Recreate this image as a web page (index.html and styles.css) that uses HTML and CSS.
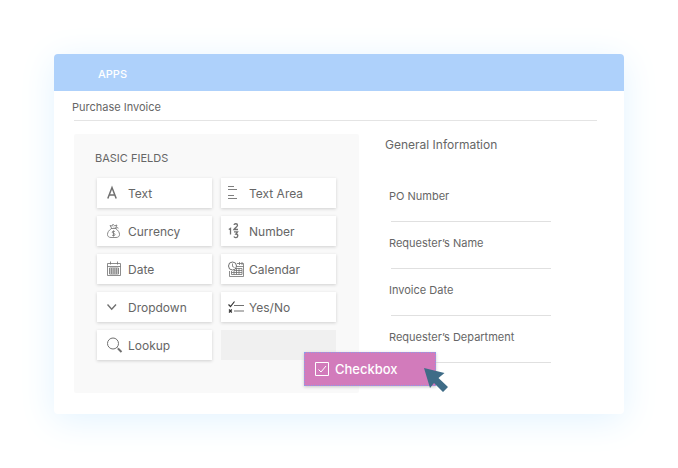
FILE: index.html
```html
<!DOCTYPE html>
<html lang="en">
    <head>
        <meta charset="utf-8">
        <title>Purchase Invoice</title>
        <link rel="stylesheet" href="styles.css">
    </head>
    <body>
        <div class="window">
            <header class="topbar">APPS</header>
            <main class="content">
                <h1 class="title">Purchase Invoice</h1>
                <div class="columns">
                    <section class="palette">
                        <h2 class="palette-title">BASIC FIELDS</h2>
                        <div class="fields">
                            <button class="field" type="button">
                                <svg class="icon" viewBox="0 0 16 16"><path d="M0.800 13.500L5 2.500L9.200 13.500M2.300 10H7.700" stroke-width="1.500"/></svg>
                                Text
                            </button>
                            <button class="field" type="button">
                                <svg class="icon" viewBox="0 0 16 16"><path d="M0 1.500H6M0 4.500H9M0 10.500H6M0 13.500H9" stroke-width="0.900"/></svg>
                                Text Area
                            </button>
                            <button class="field" type="button">
                                <svg class="icon" viewBox="0 0 16 16"><path d="M4.500 5.500C1.500 7.500 0.500 9.500 0.500 11.500C0.500 13.500 2 14.500 4 14.500H9C11 14.500 12.500 13.500 12.500 11.500C12.500 9.500 11.500 7.500 8.500 5.500M4 5.500H9.500M4.500 5L3 2.500L5 3L6 1.200L7.500 2.800L10 2L8.500 5M6 3.500L7 4.500M9 4L11.500 5.200M8 8.800C7.200 7.800 5.200 8 5.200 9.200C5.200 10.600 8 10 8 11.600C8 12.900 5.800 13 5 12M6.500 7.500V13.500" stroke-width="0.800"/></svg>
                                Currency
                            </button>
                            <button class="field" type="button">
                                <svg class="icon" viewBox="0 0 16 16"><path d="M0.800 6.500L2.500 5.500V11.500M6 2C6.300 0.300 9.500 0.300 9.500 2.200C9.500 3.600 7.500 4.500 6 6.500H10M6 8.800H9.500L7.800 11C9 11 9.800 11.700 9.800 12.800C9.800 15 6.500 15 5.900 13.500" stroke-width="1.300"/></svg>
                                Number
                            </button>
                            <button class="field" type="button">
                                <svg class="icon" viewBox="0 0 16 16"><path d="M0.500 2.500H13.500V14.500H0.500ZM0.500 5.500H13.500M3.500 0.500V3.500M10.500 0.500V3.500M2.500 7H11.500V13H2.500ZM2.500 9H11.500M2.500 11H11.500M4.700 7V13M7 7V13M9.300 7V13" stroke-width="0.800"/></svg>
                                Date
                            </button>
                            <button class="field" type="button">
                                <svg class="icon" viewBox="0 0 16 16"><circle cx="4.500" cy="5" r="4"/><path d="M4.500 2.500V5.500L6.500 6.500M9 2.500H15.500V15.500H1.500V10M8.500 5.500H15.500M11.500 1V4M14 1V4M7 7.500H14V13.500H3.500V10M3.500 11.500H14M6 9.500H14M6 9.500V13.500M8.500 7.500V13.500M11 7.500V13.500" stroke-width="0.800"/></svg>
                                Calendar
                            </button>
                            <button class="field" type="button">
                                <svg class="icon" viewBox="0 0 16 16"><path d="M0.500 5.500L4.700 10.200L9 5.500" stroke-width="1.400"/></svg>
                                Dropdown
                            </button>
                            <button class="field" type="button">
                                <svg class="icon" viewBox="0 0 16 16"><path d="M6 6.500H16M6 12H16" stroke-width="1.200"/><path class="dark" d="M0.500 5.500L2.500 7.500L6.500 2.500M1 10.500L3.800 13.500M3.800 10.500L1 13.500" stroke-width="1.200"/></svg>
                                Yes/No
                            </button>
                            <button class="field" type="button">
                                <svg class="icon" viewBox="0 0 16 16"><circle cx="6" cy="6.500" r="5.500"/><path d="M9.800 10.300L11 11.500"/><path d="M11 11.500L14.500 15" stroke-width="2"/></svg>
                                Lookup
                            </button>
                            <div class="slot">
                                <button class="dragged" type="button">
                                    <svg class="icon" viewBox="0 0 16 16"><path d="M1.500 1.500H14.500V14.500H1.500ZM4.500 8.500L7 11L12 5"/></svg>
                                    Checkbox
                                </button>
                                <svg class="pointer" viewBox="0 0 24 25"><path d="M0 1L20.500 6L14.500 11L24 20L19 25L10 16L6 21Z"/></svg>
                            </div>
                        </div>
                    </section>
                    <form class="form">
                        <h2 class="form-title">General Information</h2>
                        <label class="label" for="po">PO Number</label>
                        <input class="input" id="po" type="text">
                        <label class="label" for="requester">Requester’s Name</label>
                        <input class="input" id="requester" type="text">
                        <label class="label" for="date">Invoice Date</label>
                        <input class="input" id="date" type="text">
                        <label class="label" for="department">Requester’s Department</label>
                        <input class="input" id="department" type="text">
                    </form>
                </div>
            </main>
        </div>
    </body>
</html>
```
FILE: styles.css
```css
*
{
    box-sizing: border-box;
}

body
{
    margin: 0;
    padding: 54px;

    background-color: #FFFFFF;
    color: #666666;
    font-family: Inter, "Liberation Sans", sans-serif;
    font-size: 11px;
    line-height: 16px;
}

h1, h2
{
    margin: 0;

    font-size: 11px;
    font-weight: 400;
}

button
{
    border: 0;

    color: inherit;
    font-family: inherit;
    text-align: left;
}

.window
{
    border-radius: 4px;
    background-color: #FFFFFF;
    box-shadow: 0 6px 36px #E2F3FF;
}

.topbar
{
    padding: 12px 44px 9px;
    border-radius: 4px 4px 0 0;

    background-color: #AED1FB;
    color: #FFFFFF;
    font-weight: 500;
}

.content
{
    padding: 8px 27px 21px 20px;
}

.title
{
    margin-left: -2px;
}

.columns
{
    display: grid;
    grid-template-columns: 285fr 212fr;
    gap: 26px;
    margin-top: 5px;
    padding-top: 13px;
    border-top: 1px solid #E4E4E4;
}

/* list of draggable field types */
.palette
{
    padding: 16px 23px 33px;
    border-radius: 2px;

    background-color: #F9F9F9;
}

.palette-title
{
    margin-left: -2px;
    margin-bottom: 12px;
}

.fields
{
    display: grid;
    grid-template-columns: 1fr 1fr;
    gap: 8px 9px;
}

.field
{
    display: flex;
    align-items: center;
    gap: 5px;
    height: 30px;
    padding: 0 0 0 10px;

    background-color: #FFFFFF;
    box-shadow: 0 1px 3px #CFCFCF;
    font-size: 12px;
}

.field:nth-child(even)
{
    padding-left: 7px;
}

.icon
{
    flex: none;
    width: 16px;
    height: 16px;

    fill: none;
    stroke: #707070;
}

.icon .dark
{
    stroke: #333333;
}

/* empty place, with the field being dragged out of it */
.slot
{
    position: relative;

    background-color: #F0F0F0;
}

.dragged
{
    display: flex;
    position: absolute;
    left: 83px;
    top: 22px;
    align-items: center;
    gap: 5px;
    width: 132px;
    height: 34px;
    padding: 0 9px;
    border: 1px dotted #8B9BEA;

    background-color: #D27BBB;
    box-shadow: 0 1px 3px #C8C8C8;
    color: #FFFFFF;
    font-size: 13px;
    font-weight: 500;
}

.dragged .icon
{
    stroke: #FFFFFF;
}

.pointer
{
    position: absolute;
    left: 203px;
    top: 37px;
    width: 24px;
    height: 25px;

    fill: #3F6C87;
}

.form-title
{
    margin-top: 3px;
    margin-bottom: 35px;

    font-size: 12px;
}

.label
{
    display: block;
    margin-left: 4px;
}

.input
{
    display: block;
    width: 160px;
    height: 18px;
    margin: 0 0 13px 6px;
    padding: 0;
    border: 0;
    border-bottom: 1px solid #E0E0E0;

    background: none;
    color: inherit;
    font: inherit;
}
```
